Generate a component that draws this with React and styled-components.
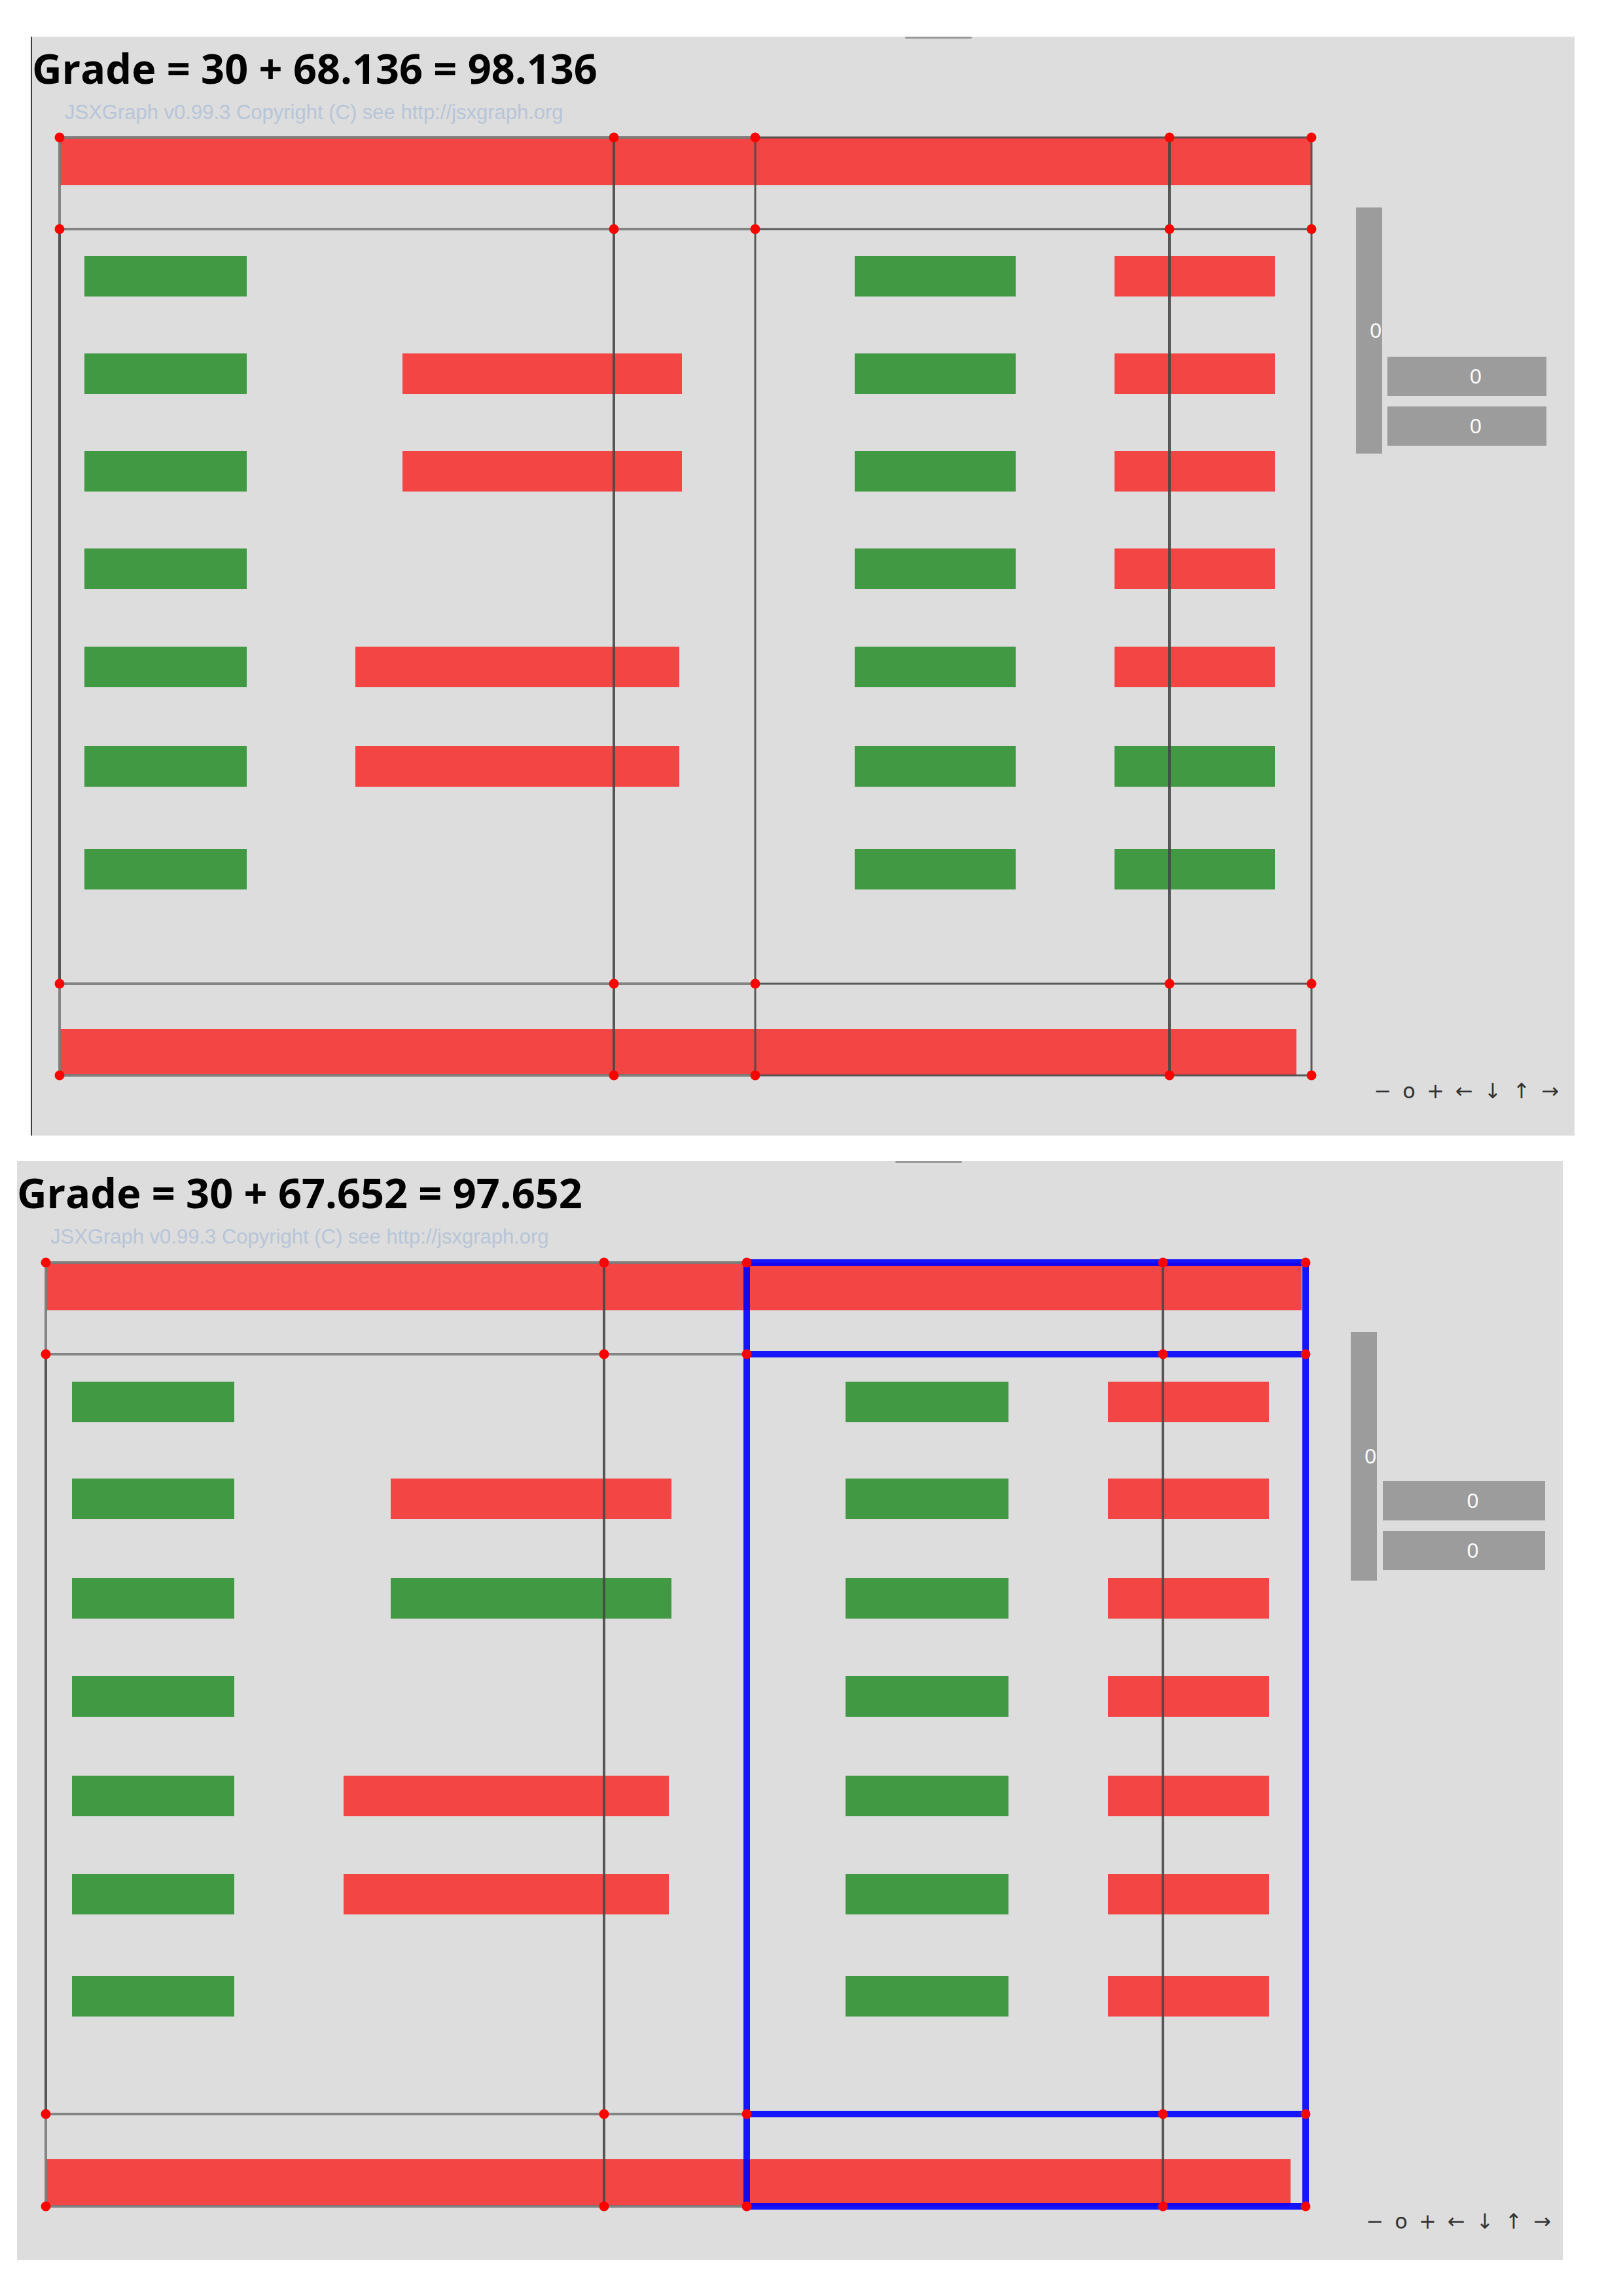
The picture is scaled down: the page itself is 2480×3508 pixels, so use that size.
import React from 'react'
import styled, { createGlobalStyle } from 'styled-components'

const HEADER_H = 132
const BOARD_H = 1679

const RED = '#f44545'
const GREEN = '#419a43'

const GlobalStyle = createGlobalStyle`
  html, body {
    margin: 0;
    padding: 0;
    background: #ffffff;
  }
  body {
    font-family: "Liberation Sans", Arial, sans-serif;
  }
`

const Page = styled.main`
  display: flex;
  flex-direction: column;
  gap: 39px;
  padding-top: 56px;
`

const Board = styled.section`
  position: relative;
  display: flex;
  flex-direction: column;
  width: ${p => p.$width}px;
  height: ${BOARD_H}px;
  margin-left: ${p => p.$left}px;
  background: #dddddd;
  box-shadow: ${p => (p.$edge ? 'inset 2px 0 0 #3d3d3d' : 'none')};
  overflow: hidden;
`

const TabMark = styled.span`
  position: absolute;
  top: 0;
  left: ${p => p.$x}px;
  width: 102px;
  height: 3px;
  border-radius: 2px;
  background: #9a9a9a;
`

const Title = styled.h1`
  margin: 0;
  padding: 5px 0 0 ${p => p.$x}px;
  font-family: "Open Sans", "Noto Sans", sans-serif;
  font-weight: 700;
  font-size: 63px;
  line-height: 86px;
  color: #000;
  white-space: nowrap;
`

const Copyright = styled.div`
  margin-top: 9px;
  padding-left: ${p => p.$x}px;
  font-family: "Liberation Sans", Arial, sans-serif;
  font-size: 31px;
  line-height: 32px;
  color: #b7c5d8;
  white-space: nowrap;
`

const Body = styled.div`
  display: flex;
  flex: 1;
  align-items: flex-start;
`

const Canvas = styled.svg`
  display: block;
  flex: none;
`

const Side = styled.div`
  display: flex;
  align-items: flex-end;
  gap: ${p => p.$gap}px;
  padding-top: 129px;
`

const VBar = styled.div`
  display: flex;
  align-items: center;
  justify-content: flex-end;
  box-sizing: border-box;
  width: 40px;
  height: ${p => p.$h}px;
  padding-right: 1px;
  background: #9c9c9c;
  color: #fbfbfb;
  font-size: 32px;
`

const HStack = styled.div`
  display: flex;
  flex-direction: column;
  gap: 16px;
  padding-bottom: ${p => p.$pb}px;
`

const HBar = styled.div`
  display: flex;
  align-items: center;
  justify-content: center;
  box-sizing: border-box;
  width: ${p => p.$w}px;
  height: 60px;
  padding-left: 27px;
  background: #9c9c9c;
  color: #fbfbfb;
  font-size: 32px;
`

const Nav = styled.nav`
  position: absolute;
  right: ${p => p.$right}px;
  bottom: ${p => p.$bottom}px;
  display: flex;
  align-items: center;
  gap: 17px;
  font-family: "DejaVu Sans", sans-serif;
  font-size: 32px;
  line-height: 40px;
  color: #333;
`

const NavItem = styled.span`
  cursor: pointer;
`

const rowsOf = (x1, x2, colors) =>
  colors.map((c, row) => (c ? { x1, x2, row, c } : null)).filter(Boolean)

const boards = [
  {
    left: 47,
    width: 2359,
    edge: true,
    tab: 1336,
    title: 'Grade = 30 + 68.136 = 98.136',
    titleX: 2,
    copyX: 52,
    graphW: 2025,
    v: [44, 891, 1107, 1740, 1957],
    h: [154, 294, 1447, 1587],
    rows: [366, 515, 664, 813, 963, 1115, 1272],
    topBar: [44, 1957],
    bottomBar: [44, 1934, 1516],
    accent: { color: '#4a4a4a', w: 3 },
    bars: [
      ...rowsOf(82, 330, ['g', 'g', 'g', 'g', 'g', 'g', 'g']),
      ...rowsOf(568, 995, [null, 'r', 'r', null, null, null, null]),
      ...rowsOf(496, 991, [null, null, null, null, 'r', 'r', null]),
      ...rowsOf(1259, 1505, ['g', 'g', 'g', 'g', 'g', 'g', 'g']),
      ...rowsOf(1656, 1901, ['r', 'r', 'r', 'r', 'r', 'g', 'g']),
    ],
    side: { gap: 8, vh: 376, hw: 243, pb: 12 },
    nav: { right: 24, bottom: 48 },
  },
  {
    left: 26,
    width: 2362,
    edge: false,
    tab: 1342,
    title: 'Grade = 30 + 67.652 = 97.652',
    titleX: 0,
    copyX: 51,
    graphW: 2038,
    v: [44, 897, 1115, 1751, 1969],
    h: [155, 295, 1456, 1597],
    rows: [368, 516, 668, 818, 970, 1120, 1276],
    topBar: [44, 1963],
    bottomBar: [44, 1946, 1525],
    accent: { color: '#0000ff', w: 10 },
    bars: [
      ...rowsOf(84, 332, ['g', 'g', 'g', 'g', 'g', 'g', 'g']),
      ...rowsOf(571, 1000, [null, 'r', 'g', null, null, null, null]),
      ...rowsOf(499, 996, [null, null, null, null, 'r', 'r', null]),
      ...rowsOf(1266, 1515, ['g', 'g', 'g', 'g', 'g', 'g', 'g']),
      ...rowsOf(1667, 1913, ['r', 'r', 'r', 'r', 'r', 'r', 'r']),
    ],
    side: { gap: 9, vh: 380, hw: 248, pb: 16 },
    nav: { right: 18, bottom: 39 },
  },
]

const LIGHT = { color: '#7a7a7a', w: 4 }
const DARK = { color: '#474747', w: 4 }

// segments of the grid: left half light, right half in the accent colour
function gridLines(b) {
  const [v0, v1, v2, v3, v4] = b.v
  const [h0, h1, h2, h3] = b.h
  const segs = []
  b.h.forEach(y => segs.push({ x1: v0, y1: y, x2: v2, y2: y, s: LIGHT }))
  segs.push({ x1: v0, y1: h0, x2: v0, y2: h1, s: LIGHT })
  segs.push({ x1: v0, y1: h2, x2: v0, y2: h3, s: LIGHT })
  segs.push({ x1: v0, y1: h1, x2: v0, y2: h2, s: DARK })
  segs.push({ x1: v1, y1: h0, x2: v1, y2: h3, s: DARK })
  segs.push({ x1: v3, y1: h0, x2: v3, y2: h3, s: DARK })
  b.h.forEach(y => segs.push({ x1: v2, y1: y, x2: v4, y2: y, s: b.accent }))
  segs.push({ x1: v2, y1: h0, x2: v2, y2: h3, s: b.accent })
  segs.push({ x1: v4, y1: h0, x2: v4, y2: h3, s: b.accent })
  return segs
}

const Graph = ({ b }) => {
  const bodyH = BOARD_H - HEADER_H
  const [h0, , , h3] = b.h
  return (
    <Canvas
      width={b.graphW}
      height={bodyH}
      viewBox={`0 ${HEADER_H} ${b.graphW} ${bodyH}`}
    >
      <rect x={b.topBar[0]} y={h0} width={b.topBar[1] - b.topBar[0]} height={73} fill={RED} />
      <rect
        x={b.bottomBar[0]}
        y={b.bottomBar[2]}
        width={b.bottomBar[1] - b.bottomBar[0]}
        height={h3 - b.bottomBar[2]}
        fill={RED}
      />
      {b.bars.map((bar, i) => (
        <rect
          key={i}
          x={bar.x1}
          y={b.rows[bar.row] - 31}
          width={bar.x2 - bar.x1}
          height={62}
          fill={bar.c === 'r' ? RED : GREEN}
        />
      ))}
      {gridLines(b).map((l, i) => (
        <line
          key={i}
          x1={l.x1}
          y1={l.y1}
          x2={l.x2}
          y2={l.y2}
          stroke={l.s.color}
          strokeWidth={l.s.w}
          strokeOpacity={0.9}
        />
      ))}
      {b.v.map(x =>
        b.h.map(y => <circle key={`${x}-${y}`} cx={x} cy={y} r={7.5} fill="#ff0000" />)
      )}
    </Canvas>
  )
}

const Widgets = ({ s }) => (
  <Side $gap={s.gap}>
    <VBar $h={s.vh}>0</VBar>
    <HStack $pb={s.pb}>
      <HBar $w={s.hw}>0</HBar>
      <HBar $w={s.hw}>0</HBar>
    </HStack>
  </Side>
)

const GradeBoard = ({ b }) => (
  <Board $left={b.left} $width={b.width} $edge={b.edge}>
    <TabMark $x={b.tab} />
    <Title $x={b.titleX}>{b.title}</Title>
    <Copyright $x={b.copyX}>JSXGraph v0.99.3 Copyright (C) see http://jsxgraph.org</Copyright>
    <Body>
      <Graph b={b} />
      <Widgets s={b.side} />
    </Body>
    <Nav $right={b.nav.right} $bottom={b.nav.bottom}>
      <NavItem>−</NavItem>
      <NavItem>o</NavItem>
      <NavItem>+</NavItem>
      <NavItem>←</NavItem>
      <NavItem>↓</NavItem>
      <NavItem>↑</NavItem>
      <NavItem>→</NavItem>
    </Nav>
  </Board>
)

export default function App() {
  return (
    <>
      <GlobalStyle />
      <Page>
        {boards.map((b, i) => (
          <GradeBoard key={i} b={b} />
        ))}
      </Page>
    </>
  )
}
